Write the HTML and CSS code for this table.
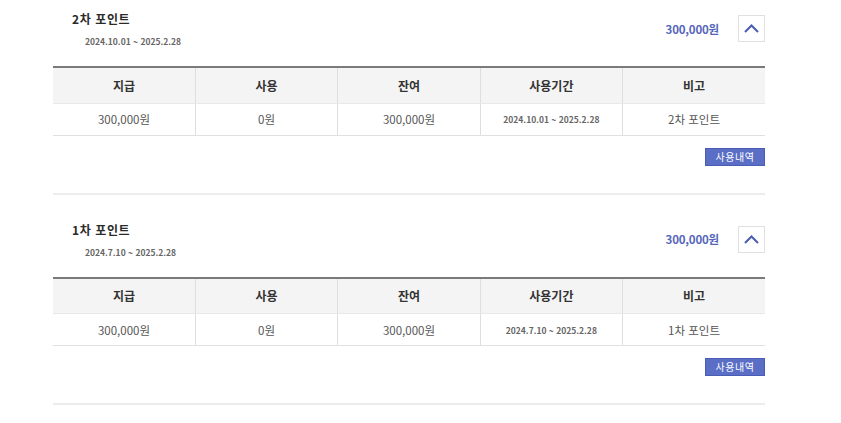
FILE: index.html
```html
<!DOCTYPE html>
<html lang="ko">
<head>
<meta charset="utf-8">
<link rel="stylesheet" href="styles.css">
</head>
<body>
<div class="wrap">
  <section class="point">
    <div class="head">
      <div class="info">
        <h3 class="title">2차 포인트</h3>
        <p class="period">2024.10.01 ~ 2025.2.28</p>
      </div>
      <div class="side">
        <span class="amount">300,000원</span>
        <button class="toggle" type="button"><svg width="25" height="25" viewBox="0 0 25 25"><polyline points="6,16 12.5,9.5 19,16" fill="none" stroke="#4a5cb4" stroke-width="2"/></svg></button>
      </div>
    </div>
    <table class="tbl">
      <thead><tr><th>지급</th><th>사용</th><th>잔여</th><th>사용기간</th><th>비고</th></tr></thead>
      <tbody><tr><td>300,000원</td><td>0원</td><td>300,000원</td><td class="date">2024.10.01 ~ 2025.2.28</td><td>2차 포인트</td></tr></tbody>
    </table>
    <div class="actions"><button class="btn" type="button">사용내역</button></div>
  </section>
  <section class="point">
    <div class="head">
      <div class="info">
        <h3 class="title">1차 포인트</h3>
        <p class="period">2024.7.10 ~ 2025.2.28</p>
      </div>
      <div class="side">
        <span class="amount">300,000원</span>
        <button class="toggle" type="button"><svg width="25" height="25" viewBox="0 0 25 25"><polyline points="6,16 12.5,9.5 19,16" fill="none" stroke="#4a5cb4" stroke-width="2"/></svg></button>
      </div>
    </div>
    <table class="tbl">
      <thead><tr><th>지급</th><th>사용</th><th>잔여</th><th>사용기간</th><th>비고</th></tr></thead>
      <tbody><tr><td>300,000원</td><td>0원</td><td>300,000원</td><td class="date">2024.7.10 ~ 2025.2.28</td><td>1차 포인트</td></tr></tbody>
    </table>
    <div class="actions"><button class="btn" type="button">사용내역</button></div>
  </section>
</div>
</body>
</html>
```
FILE: styles.css
```css
* { box-sizing: border-box; }
html, body { margin: 0; padding: 0; background: #fff; }
body {
  font-family: "Noto Sans CJK KR", "Noto Sans", "Liberation Sans", sans-serif;
  color: #333;
}
.wrap { width: 712px; margin-left: 53px; }
.point { padding-top: 27px; padding-bottom: 27px; border-bottom: 2px solid #ececec; }
.point:first-child { padding-top: 11px; }
.head { display: flex; justify-content: space-between; align-items: flex-start; height: 55px; }
.info { padding-left: 19px; }
.title { margin: 0; font-size: 12px; line-height: 16px; font-weight: 700; color: #2b2b2b; letter-spacing: 0.6px; }
.period { margin: 7px 0 0 13px; font-size: 8.5px; line-height: 14px; font-weight: 700; color: #666; }
.side { display: flex; align-items: center; gap: 19px; margin-top: 4px; }
.amount { font-size: 11.5px; font-weight: 700; color: #5566bb; letter-spacing: -0.2px; }
.toggle {
  width: 27px; height: 27px; padding: 0; margin: 0;
  border: 1px solid #e0e0e0; background: #fff;
  display: flex; align-items: center; justify-content: center;
}
.toggle svg { display: block; }
.tbl { width: 100%; border-collapse: collapse; table-layout: fixed; }
.tbl thead tr { border-top: 2px solid #7a7a7a; }
.tbl th {
  height: 36px; background: #f4f4f4; font-size: 12px; font-weight: 700; color: #333;
  border-left: 1px solid #dedede; border-bottom: 1px solid #e8e8e8; padding: 0;
}
.tbl td {
  height: 32px; font-size: 11.5px; color: #555; text-align: center; padding: 0;
  border-left: 1px solid #dedede; border-bottom: 1px solid #e0e0e0;
}
.tbl th:first-child, .tbl td:first-child { border-left: 0; }
.tbl td.date { font-size: 8.5px; font-weight: 700; color: #666; }
.actions { display: flex; justify-content: flex-end; margin-top: 12px; }
.btn {
  width: 60px; height: 18px; padding: 0; border: 1px solid #4a5cb4; background: #5b6ec5;
  color: #fff; font-family: inherit; font-size: 10px; line-height: 16px; letter-spacing: 0.5px;
}
```
